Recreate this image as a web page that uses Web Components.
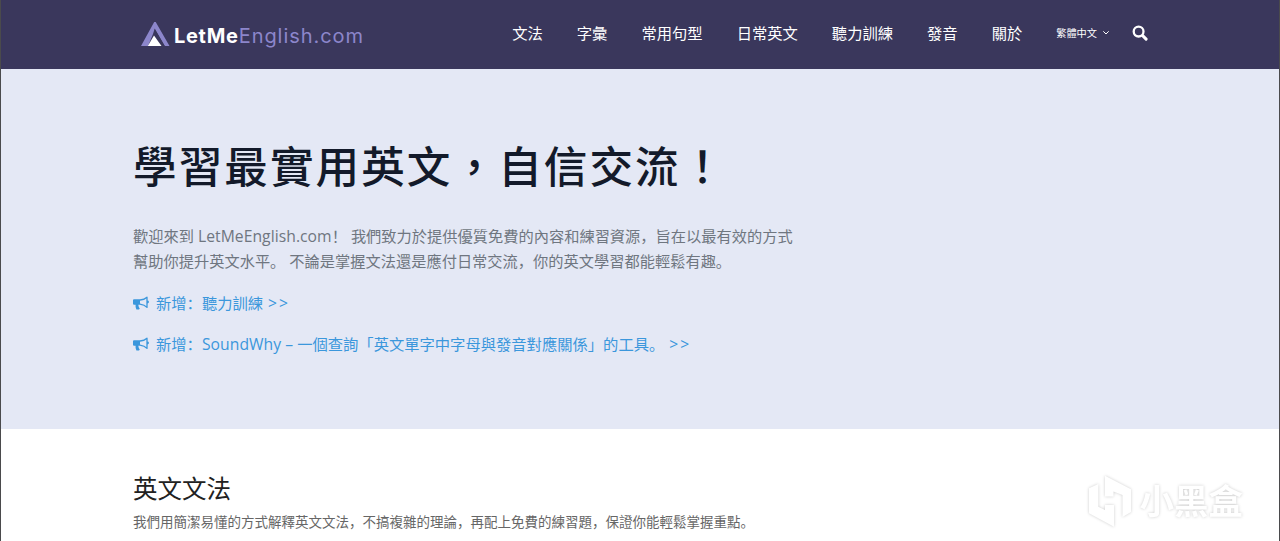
<!DOCTYPE html>
<html lang="zh-Hant">
<head>
<meta charset="utf-8">
<title>LetMeEnglish.com</title>
<style>
    body {
        margin: 0;
        font-family: "Open Sans", "Noto Sans CJK SC", sans-serif;
        overflow: hidden;
    }
</style>
</head>
<body lang="zh-Hans">
<lme-page>
    <lme-header slot="header">
        <lme-logo slot="logo"></lme-logo>
        <lme-nav-item>文法</lme-nav-item>
        <lme-nav-item>字彙</lme-nav-item>
        <lme-nav-item>常用句型</lme-nav-item>
        <lme-nav-item>日常英文</lme-nav-item>
        <lme-nav-item>聽力訓練</lme-nav-item>
        <lme-nav-item>發音</lme-nav-item>
        <lme-nav-item>關於</lme-nav-item>
        <lme-language>繁體中文</lme-language>
        <lme-search></lme-search>
    </lme-header>
    <lme-hero>
        <span slot="title" lang="zh-Hant">學習最實用英文，自信交流！</span>
        <span slot="intro">歡迎來到 <lme-latin>LetMeEnglish.com</lme-latin>！ 我們致力於提供優質免費的內容和練習資源，旨在以最有效的方式<br>幫助你提升英文水平。 不論是掌握文法還是應付日常交流，你的英文學習都能輕鬆有趣。</span>
        <lme-news>新增：聽力訓練 <lme-latin arrows>&gt;&gt;</lme-latin></lme-news>
        <lme-news>新增：<lme-latin>SoundWhy –</lme-latin> 一個查詢「英文單字中字母與發音對應關係」的工具。 <lme-latin arrows>&gt;&gt;</lme-latin></lme-news>
    </lme-hero>
    <lme-section>
        <span slot="title">英文文法</span>
        我們用簡潔易懂的方式解釋英文文法，不搞複雜的理論，再配上免費的練習題，保證你能輕鬆掌握重點。
    </lme-section>
    <lme-watermark slot="overlay">小黑盒</lme-watermark>
</lme-page>

<script>
const define = (name, markup) => {
    const template = document.createElement("template");
    // trimmed, so inline elements add no stray spaces
    template.innerHTML = markup.trim();

    customElements.define(name, class extends HTMLElement {
        connectedCallback() {
            if (!this.shadowRoot) {
                this.attachShadow({mode: "open"});
                this.shadowRoot.appendChild(template.content.cloneNode(true));
            }
        }
    });
};

define("lme-page", `
    <style>
        :host {
            display: block;
            position: relative;
            box-sizing: border-box;
            height: 541px;
            overflow: hidden;
            background: #fff;
            border-left: 1px solid #4a4a4c;
            border-right: 1px solid #4a4a4c;
        }
    </style>
    <slot name="header"></slot>
    <main><slot></slot></main>
    <slot name="overlay"></slot>
`);

define("lme-header", `
    <style>
        :host {
            display: flex;
            align-items: center;
            box-sizing: border-box;
            height: 69px;
            padding: 0 131px 3px 139px;
            background: #3a375c;
            color: #fff;
        }

        nav {
            display: flex;
            align-items: center;
            gap: 34px;
            margin-left: auto;
        }
    </style>
    <slot name="logo"></slot>
    <nav><slot></slot></nav>
`);

define("lme-logo", `
    <style>
        :host {
            display: flex;
            align-items: center;
            padding-top: 6px;
            font: 400 20px/26px Inter, sans-serif;
            color: #8c86cb;
            white-space: nowrap;
        }

        svg {
            display: block;
            margin: -4px 4px 0 1px;
        }

        b {
            color: #fff;
            letter-spacing: 0.7px;
        }

        .rest {
            letter-spacing: 0.95px;
        }
    </style>
    <svg width="29" height="26" viewBox="0 0 29 26">
        <path fill="#8c86cb" d="M0 25 13.2 1h1.5L28.5 25h-4.700L13.700 7.500 12 13 7 25z"/>
        <path fill="#3a375c" d="m13.700 8 10 17H19z"/>
        <path fill="#fff" d="M6.800 25 13 14.500 20.500 25z"/>
    </svg>
    <b>LetMe</b><span class="rest">English.com</span>
`);

define("lme-nav-item", `
    <style>
        :host {
            display: block;
            font-size: 15.3px;
            line-height: 24px;
            white-space: nowrap;
        }
    </style>
    <slot></slot>
`);

define("lme-language", `
    <style>
        :host {
            display: flex;
            align-items: center;
            gap: 5px;
            margin-right: -12px;
            font-size: 10.2px;
            line-height: 16px;
            white-space: nowrap;
        }
    </style>
    <slot></slot>
    <svg width="8" height="6" viewBox="0 0 8 6" fill="none" stroke="#fff">
        <path d="M1.3 1.3 4 4l2.7-2.7"/>
    </svg>
`);

define("lme-search", `
    <style>
        :host { display: block; }
        svg { display: block; }
    </style>
    <svg width="16" height="16" viewBox="0 0 16 16" fill="none" stroke="#fff" stroke-linecap="round">
        <circle cx="6.6" cy="6.6" r="4.9" stroke-width="2.3"/>
        <path stroke-width="3" d="m10.9 10.9 3.2 3.2"/>
    </svg>
`);

define("lme-hero", `
    <style>
        :host {
            display: block;
            box-sizing: border-box;
            height: 360px;
            padding: 63px 132px 0;
            background: #e4e8f5;
        }

        h1 {
            margin: 0;
            font: 500 43.6px/64px "Noto Sans CJK TC", sans-serif;
            letter-spacing: 2.05px;
            color: #131a2a;
        }

        p {
            margin: 28px 0 18px;
            font-size: 15.24px;
            line-height: 24.5px;
            color: #6f7680;
            white-space: nowrap;
        }

        .news {
            display: flex;
            flex-direction: column;
            gap: 17px;
        }
    </style>
    <h1><slot name="title"></slot></h1>
    <p><slot name="intro"></slot></p>
    <div class="news"><slot></slot></div>
`);

define("lme-latin", `
    <style>
        :host {
            font-size: 15.7px;
            letter-spacing: 0.05px;
        }

        :host([arrows]) {
            margin-left: 1px;
            letter-spacing: 2px;
        }
    </style><slot></slot>
`);

define("lme-news", `
    <style>
        :host {
            display: flex;
            align-items: center;
            gap: 7px;
            font-size: 15.3px;
            line-height: 24px;
            color: #3b97dc;
            white-space: nowrap;
        }

        svg { flex: none; }
    </style>
    <svg width="16" height="14" viewBox="0 0 16 14">
        <path fill="#3b97dc" d="M0 4.2Q0 3.2 1 3.2H7v5.600H5.300q.2 2.400 1.500 3.900-1.100 1.200-3.400.7Q2.200 10.900 2.600 8.800H1Q0 8.800 0 7.800z"/>
        <path fill="none" stroke="#3b97dc" stroke-width="1.3" stroke-linejoin="round" d="M7 4Q11.500 3.700 14 1.200v10.200Q11.500 8.600 7 8.100"/>
        <path fill="#3b97dc" d="M14 4.600q2 0 2 1.400T14 7.400z"/>
    </svg>
    <div><slot></slot></div>
`);

define("lme-section", `
    <style>
        :host {
            display: block;
            padding: 42px 132px 0;
            font-size: 13.5px;
            line-height: 22px;
            color: #666;
            white-space: nowrap;
        }

        h2 {
            margin: 0 0 4px;
            font-size: 24.5px;
            line-height: 36px;
            font-weight: 400;
            color: #212121;
        }
    </style>
    <h2><slot name="title"></slot></h2>
    <slot></slot>
`);

define("lme-watermark", `
    <style>
        :host {
            display: flex;
            align-items: center;
            gap: 8px;
            position: absolute;
            right: 36px;
            bottom: 13px;
            font: 700 34.5px/54px "Noto Sans CJK SC", sans-serif;
            color: #fff;
            filter: drop-shadow(0 0 1.5px rgba(0, 0, 0, 0.2));
        }

        span { margin-top: -5px; }
    </style>
    <svg width="44" height="54" viewBox="0 0 44 54" fill="#fff">
        <path d="M1 14.300 10.300 10v22.700L17 36v-5h9v21.700L1 39.300z"/>
        <path d="M17 1.700 43 15.300V38l-8.500 5V21l-9-3.500v5H17z"/>
    </svg>
    <span><slot></slot></span>
`);
</script>
</body>
</html>
